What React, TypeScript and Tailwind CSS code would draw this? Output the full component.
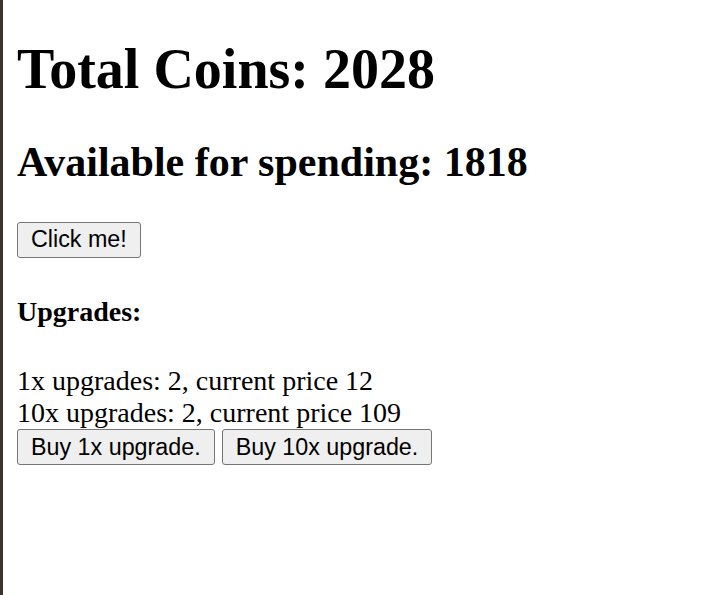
import React from "react";

const upgrades = [
  { label: "1x upgrades", count: 2, price: 12 },
  { label: "10x upgrades", count: 2, price: 109 },
];

function GameButton({ children }: { children: React.ReactNode }) {
  return (
    <button className="h-[36px] px-[13px] bg-[#efefef] border border-[#767676] rounded-[3px] text-[23.3px] leading-none text-black font-['Liberation_Sans',Arial,sans-serif]">
      {children}
    </button>
  );
}

export default function App() {
  return (
    <div className="flex min-h-[595px] w-[720px] bg-white">
      {/* window edge */}
      <div className="w-[3px] shrink-0 bg-[#3b3330]" />

      <div className="flex flex-col pl-[14px] font-['Liberation_Serif','Times_New_Roman',serif] text-black">
        <h1 className="mt-[37px] text-[56px] font-bold leading-[1.15]">
          Total Coins: 2028
        </h1>
        <h2 className="mt-[37px] text-[42px] font-bold leading-[1.15]">
          Available for spending: 1818
        </h2>

        <div className="mt-[35px]">
          <GameButton>Click me!</GameButton>
        </div>

        <h4 className="mt-[38px] text-[28px] font-bold leading-[1.15]">
          Upgrades:
        </h4>

        <div className="mt-[37px] flex flex-col text-[28px] leading-[1.15]">
          {upgrades.map((u) => (
            <div key={u.label}>
              {u.label}: {u.count}, current price {u.price}
            </div>
          ))}
        </div>

        <div className="flex gap-[7px]">
          <GameButton>Buy 1x upgrade.</GameButton>
          <GameButton>Buy 10x upgrade.</GameButton>
        </div>
      </div>
    </div>
  );
}
